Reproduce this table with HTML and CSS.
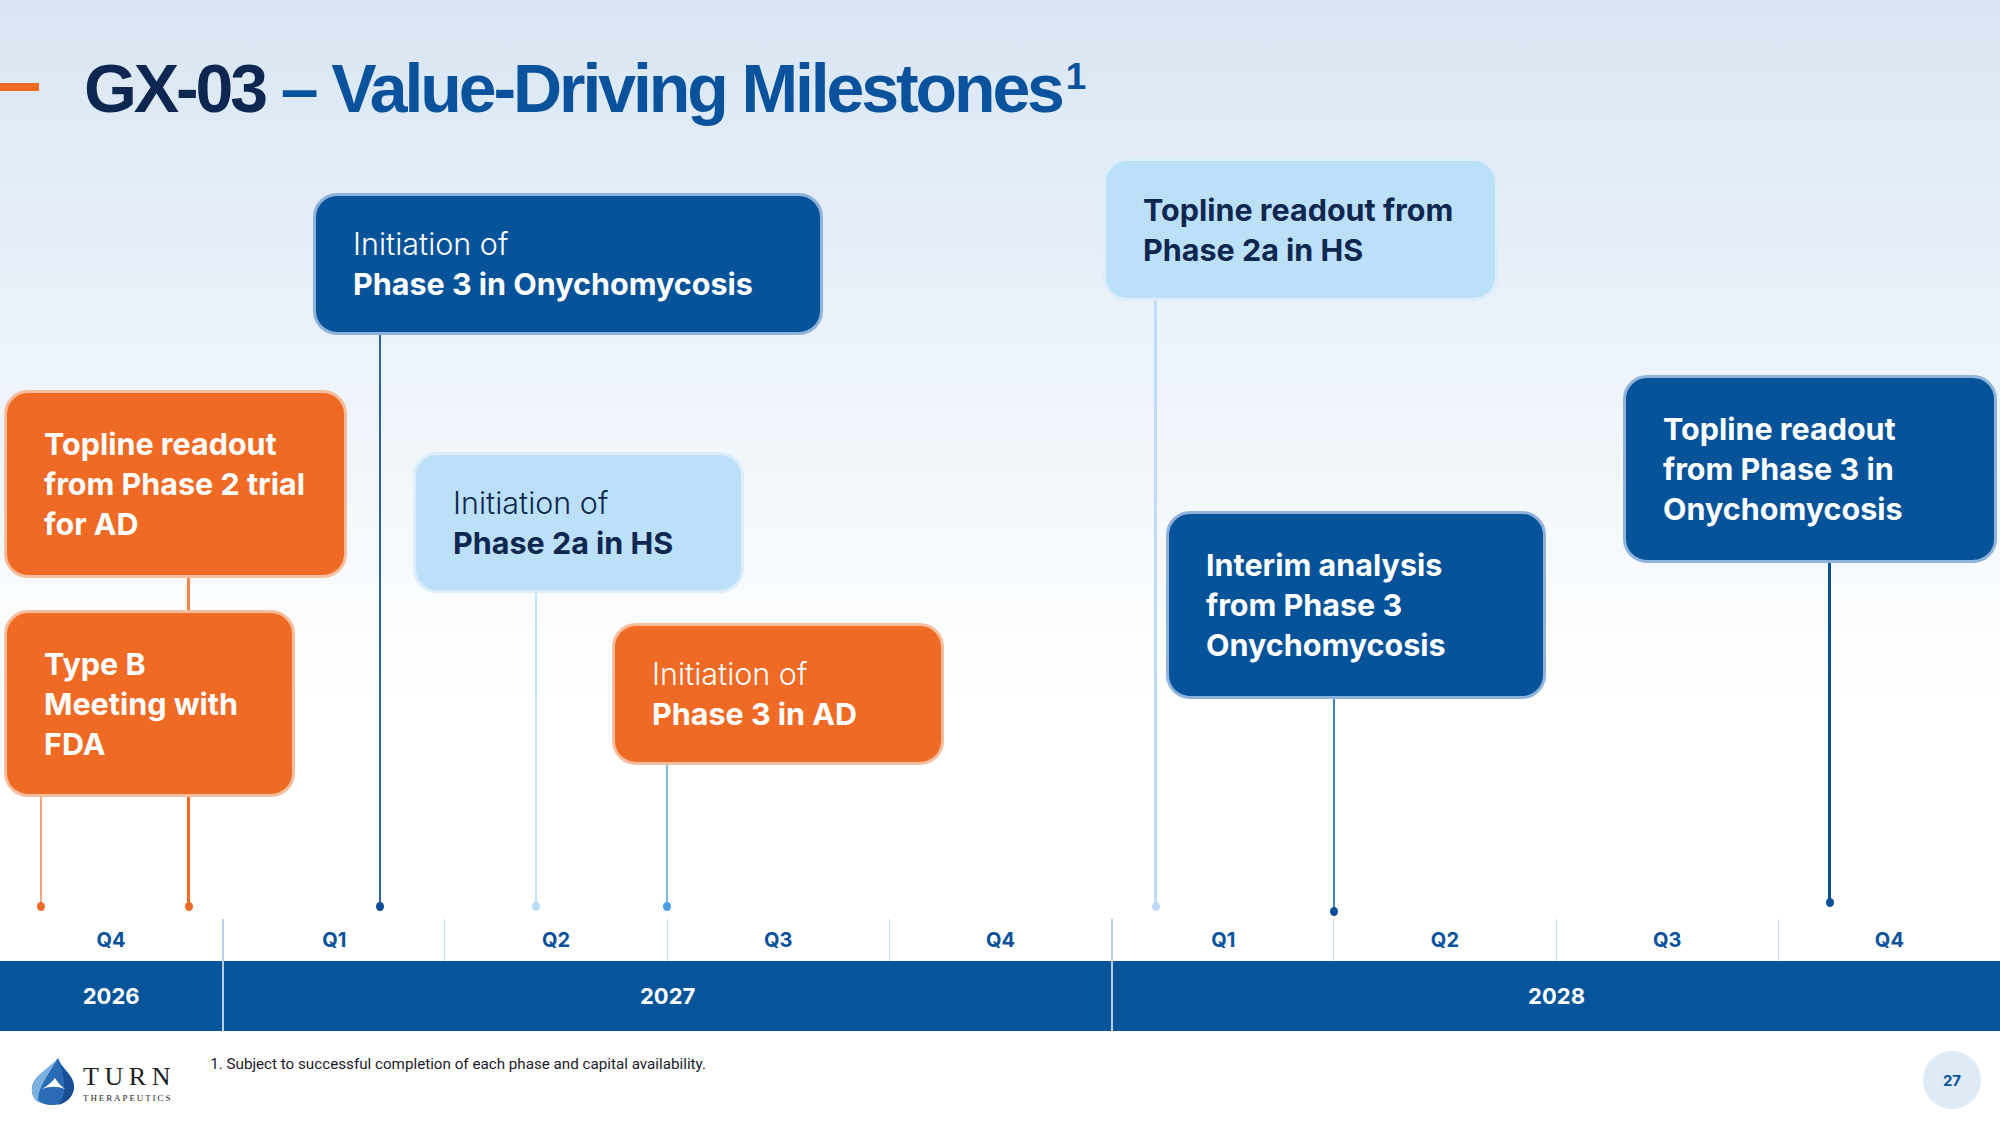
FILE: index.html
```html
<!DOCTYPE html>
<html lang="en">
<head>
<meta charset="utf-8">
<title>GX-03 – Value-Driving Milestones</title>
<link rel="stylesheet" href="styles.css">
</head>
<body>
<div class="slide">
  <header class="header">
    <span class="accent"></span>
    <h1 class="title"><span class="code">GX-03</span> – Value-Driving Milestones<span class="sup">1</span></h1>
  </header>

  <main class="canvas">
    <div class="stem s-a"></div>
    <div class="stem s-b dot"></div>
    <div class="stem s-c dot"></div>
    <div class="stem s-d dot"></div>
    <div class="stem s-e dot"></div>
    <div class="stem s-f dot"></div>
    <div class="stem s-g dot"></div>
    <div class="stem s-h dot"></div>
    <div class="stem s-i dot"></div>

    <div class="card orange c1">
      <div class="txt"><div>Topline readout</div><div>from Phase 2 trial</div><div>for AD</div></div>
    </div>
    <div class="card orange c2">
      <div class="txt"><div>Type B</div><div>Meeting with</div><div>FDA</div></div>
    </div>
    <div class="card navy c3">
      <div class="txt"><div class="light">Initiation of</div><div>Phase 3 in Onychomycosis</div></div>
    </div>
    <div class="card sky c4">
      <div class="txt"><div class="light">Initiation of</div><div>Phase 2a in HS</div></div>
    </div>
    <div class="card orange c5">
      <div class="txt"><div class="light">Initiation of</div><div>Phase 3 in AD</div></div>
    </div>
    <div class="card sky c6">
      <div class="txt"><div>Topline readout from</div><div>Phase 2a in HS</div></div>
    </div>
    <div class="card navy c7">
      <div class="txt"><div>Interim analysis</div><div>from Phase 3</div><div>Onychomycosis</div></div>
    </div>
    <div class="card navy c8">
      <div class="txt"><div>Topline readout</div><div>from Phase 3 in</div><div>Onychomycosis</div></div>
    </div>
  </main>

  <div class="quarters">
    <div class="q">Q4</div>
    <div class="q yearline">Q1</div>
    <div class="q">Q2</div>
    <div class="q">Q3</div>
    <div class="q">Q4</div>
    <div class="q yearline">Q1</div>
    <div class="q">Q2</div>
    <div class="q">Q3</div>
    <div class="q">Q4</div>
  </div>
  <div class="years">
    <div class="yr span1">2026</div>
    <div class="yr span4 split">2027</div>
    <div class="yr span4 split">2028</div>
  </div>

  <footer class="footer">
    <div class="logo">
      <svg class="drop" viewBox="0 0 43 47" width="43" height="47" aria-hidden="true">
        <path d="M27 0 C20 10 2 17 1 30 C0 40 9 47 21 47 C33 47 43 39 43 28 C43 17 31 11 27 0 Z" fill="#2a6cb4"/>
        <path d="M27 0 C19 10 3 17 1 30 C0 36 3 42 8 45 C5 33 14 22 27 0 Z" fill="#7cb0e1"/>
        <path d="M27 0 C29 12 43 17 43 29 C43 38 36 45 27 47 C36 38 35 22 27 0 Z" fill="#174f95"/>
        <path d="M11 31 C16 28 20 25 24 20 C27 25 30 28 34 31 C26 28 19 28 11 31 Z" fill="#ffffff"/>
      </svg>
      <div class="wordmark">
        <div class="turn">TURN</div>
        <div class="thera">THERAPEUTICS</div>
      </div>
    </div>
    <p class="note">1. Subject to successful completion of each phase and capital availability.</p>
    <div class="page">27</div>
  </footer>
</div>
</body>
</html>
```

FILE: styles.css
```css
* { box-sizing: border-box; }

html, body {
  margin: 0;
  padding: 0;
}

body {
  width: 2000px;
  height: 1125px;
  overflow: hidden;
  font-family: Inter, "Noto Sans", sans-serif;
}

.slide {
  width: 2000px;
  height: 1125px;
  display: flex;
  flex-direction: column;
  background: linear-gradient(180deg, #d8e6f3 0%, #e6eff8 22%, #f4f8fc 45%, #ffffff 62%, #ffffff 100%);
  overflow: hidden;
}

/* ---------- header ---------- */
.header {
  height: 140px;
  flex: none;
  display: flex;
  align-items: flex-start;
}

.accent {
  display: block;
  width: 39px;
  height: 8px;
  margin-top: 83px;
  background: #f06b22;
}

.title {
  margin: 54px 0 0 45px;
  font-family: "Liberation Sans", Arial, sans-serif;
  font-weight: 700;
  font-size: 68px;
  line-height: 68px;
  letter-spacing: -3.1px;
  color: #0a539c;
  white-space: nowrap;
}

.code { color: #0e2750; }

.sup {
  display: inline-block;
  vertical-align: top;
  font-size: 37px;
  line-height: 37px;
  padding-top: 4px;
  margin-left: 4px;
  letter-spacing: 0;
}

/* ---------- canvas ---------- */
.canvas {
  flex: none;
  height: 779px;
  position: relative;
}

.stem {
  position: absolute;
  z-index: 1;
}

.stem.dot::after {
  content: "";
  position: absolute;
  left: 50%;
  bottom: -4px;
  width: 8px;
  height: 9px;
  margin-left: -4px;
  border-radius: 50%;
  background: inherit;
}

.s-a { left: 187px;  top: 436px; height: 36px;  width: 3px; background: #f0844a; }
.s-b { left: 40px;   top: 655px; height: 112px; width: 2px; background: #f5a67b; }
.s-b::after { background: #ef6a25 !important; }
.s-c { left: 187px;  top: 655px; height: 112px; width: 3px; background: #ee6a24; }
.s-d { left: 379px;  top: 193px; height: 574px; width: 2px; background: #2c62a3; }
.s-d::after { background: #0a4f95 !important; }
.s-e { left: 535px;  top: 451px; height: 316px; width: 2px; background: #c5e1f7; }
.s-e::after { background: #b9dbf5 !important; }
.s-f { left: 666px;  top: 623px; height: 144px; width: 2px; background: #80bde9; }
.s-f::after { background: #4a9de0 !important; }
.s-g { left: 1154px; top: 159px; height: 608px; width: 3px; background: #bedcf5; }
.s-h { left: 1333px; top: 557px; height: 215px; width: 2px; background: #3f7ebf; }
.s-h::after { background: #0a4f95 !important; }
.s-i { left: 1828px; top: 421px; height: 342px; width: 3px; background: #0b4f96; }

.card {
  position: absolute;
  z-index: 2;
  display: flex;
  align-items: center;
  padding-left: 37px;
  border: 3px solid;
  border-radius: 24px;
}

.card.orange { background: #ef6a25; border-color: #f6bd9c; color: #ffffff; }
.card.navy   { background: #06539a; border-color: #8fb3da; color: #ffffff; }
.card.sky    { background: #bde0f9; border-color: #dcedfb; color: #0e2750; }

.txt {
  font-family: Inter, "Noto Sans", sans-serif;
  font-weight: 700;
  font-size: 30.5px;
  line-height: 40px;
  white-space: nowrap;
}

.txt .light { font-weight: 300; }

.c1 { left: 4px;    top: 250px; width: 343px; height: 188px; }
.c2 { left: 4px;    top: 470px; width: 291px; height: 187px; }
.c3 { left: 313px;  top: 53px;  width: 510px; height: 142px; }
.c4 { left: 413px;  top: 312px; width: 331px; height: 141px; }
.c5 { left: 612px;  top: 483px; width: 332px; height: 142px; }
.c6 { left: 1103px; top: 18px;  width: 395px; height: 143px; }
.c7 { left: 1166px; top: 371px; width: 380px; height: 188px; }
.c8 { left: 1623px; top: 235px; width: 374px; height: 188px; }

/* ---------- axis ---------- */
.quarters {
  flex: none;
  height: 42px;
  display: grid;
  grid-template-columns: repeat(9, 1fr);
}

.q {
  display: flex;
  align-items: center;
  justify-content: center;
  border-left: 1px solid #c9dcef;
  font-weight: 700;
  font-size: 20px;
  color: #0a529b;
}

.q:first-child { border-left: none; }
.q.yearline { border-left: 2px solid #b9cde3; }

.years {
  flex: none;
  height: 70px;
  display: grid;
  grid-template-columns: repeat(9, 1fr);
  background: #06549a;
}

.yr {
  display: flex;
  align-items: center;
  justify-content: center;
  font-weight: 700;
  font-size: 22px;
  color: #ffffff;
}

.span1 { grid-column: span 1; }
.span4 { grid-column: span 4; }
.split { border-left: 2px solid #b9cde3; }

/* ---------- footer ---------- */
.footer {
  flex: none;
  height: 94px;
  background: #ffffff;
  display: flex;
  align-items: flex-start;
  padding-left: 31px;
  padding-right: 19px;
}

.logo {
  display: flex;
  align-items: flex-start;
  margin-top: 27px;
}

.drop { display: block; flex: none; }

.wordmark {
  margin-left: 9px;
  margin-top: 6px;
  color: #231f20;
}

.turn {
  font-family: "Liberation Serif", "Times New Roman", serif;
  font-size: 26px;
  line-height: 26px;
  letter-spacing: 5.6px;
}

.thera {
  font-family: "Liberation Serif", "Times New Roman", serif;
  font-size: 9px;
  line-height: 10px;
  letter-spacing: 1.9px;
  margin-top: 3px;
}

.note {
  margin: 25px 0 0 34px;
  font-family: Roboto, "Noto Sans", sans-serif;
  font-size: 15.2px;
  line-height: 16px;
  color: #1b1b2b;
}

.page {
  margin-left: auto;
  margin-top: 20px;
  width: 58px;
  height: 58px;
  border-radius: 50%;
  background: #ddebf7;
  display: flex;
  align-items: center;
  justify-content: center;
  font-weight: 700;
  font-size: 15px;
  color: #0a529b;
}
```
